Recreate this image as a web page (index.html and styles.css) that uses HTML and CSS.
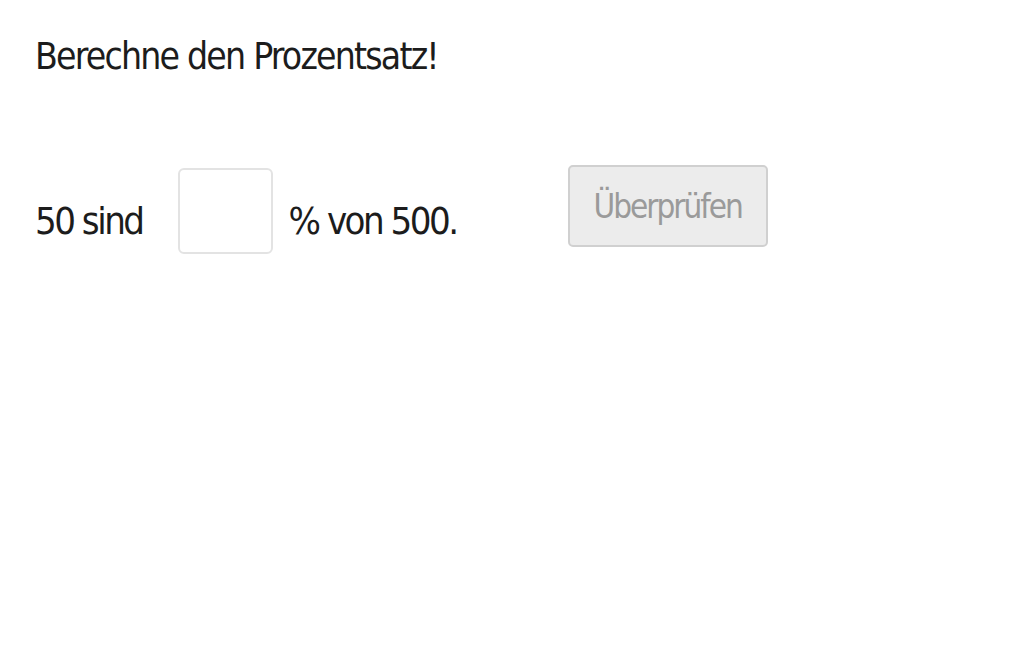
FILE: index.html
```html
<!DOCTYPE html>
<html lang="de">
<head>
    <meta charset="UTF-8">
    <meta name="viewport" content="width=device-width, initial-scale=1.0">
    <title>Prozentsatz</title>
    <link rel="stylesheet" href="styles.css">
</head>
<body>

    <div class="task">
        <h2 class="task-title">Berechne den Prozentsatz!</h2>

        <div class="task-row">
            <span class="task-text">50 sind</span>
            <input type="text" class="answer" aria-label="Prozentsatz">
            <span class="task-text after">% von 500.</span>
            <button class="check" disabled>Überprüfen</button>
        </div>
    </div>

</body>
</html>
```

FILE: styles.css
```css
body {
    margin: 0;
    background: #fff;
    font-family: "DejaVu Sans Condensed", "Liberation Sans", sans-serif;
    color: #1c1c1c;
}
.task {
    padding: 33px 0 0 35px;
}
.task-title {
    margin: 0;
    font-size: 37px;
    font-weight: normal;
    letter-spacing: -1.8px;
    line-height: 48px;
}
.task-row {
    display: flex;
    align-items: flex-start;
    margin-top: 84px;
}
.task-text {
    margin-top: 32px;
    font-size: 38px;
    letter-spacing: -2.5px;
    line-height: 48px;
}
.answer {
    box-sizing: border-box;
    width: 95px;
    height: 86px;
    margin: 3px 0 0 35px;
    border: 2px solid #e3e3e3;
    border-radius: 6px;
    background: #fff;
}
.task-text.after {
    margin-left: 16px;
}
.check {
    box-sizing: border-box;
    width: 200px;
    height: 82px;
    margin-left: 111px;
    border: 2px solid #d0d0d0;
    border-radius: 5px;
    background: #ececec;
    color: #9a9a9a;
    font-family: inherit;
    font-size: 33px;
    letter-spacing: -2px;
}
```
